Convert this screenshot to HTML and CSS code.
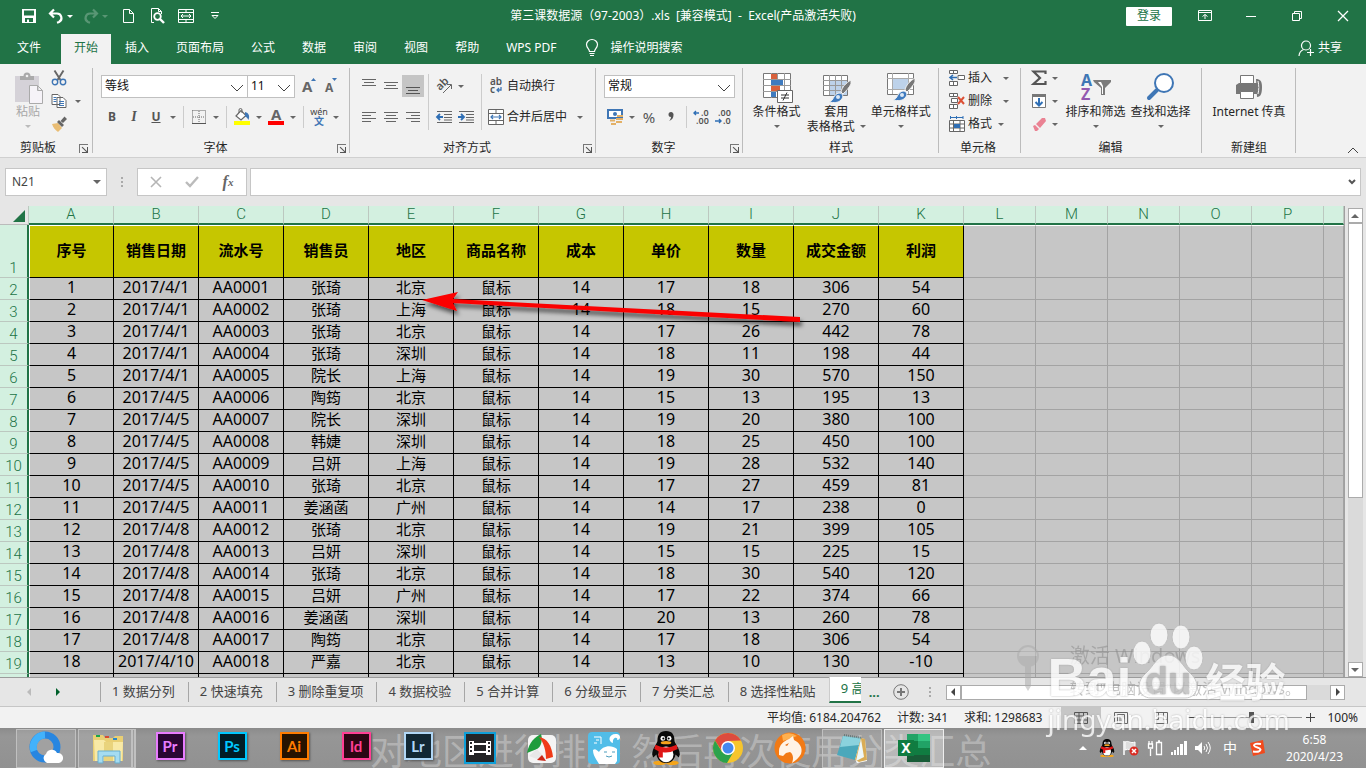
FILE: index.html
```html
<!DOCTYPE html>
<html lang="zh-CN">
<head>
<meta charset="utf-8">
<title>第三课数据源（97-2003）.xls - Excel</title>
<link rel="stylesheet" href="styles.css">
</head>
<body>
<div class="app">
<header class="titlebar">
  <div class="quick">
    <button class="q-btn" aria-label="保存"><svg width="16" height="16" viewBox="0 0 16 16"><path fill="#fff" fill-rule="evenodd" d="M1 1h14v14H1zM3 2.500v5h10v-5zM4 10v4h2v-2.500h2V14h4v-4z"/></svg></button>
    <button class="q-btn wide" aria-label="撤消"><svg width="16" height="16" viewBox="0 0 16 16"><path fill="none" stroke="#fff" stroke-width="2.200" d="M6 1.500L2 5.500l4 4M2 5.500h7a4.500 4.500 0 0 1 2 8.500l-2 .7"/></svg><i class="dd light"></i></button>
    <button class="q-btn wide faded" aria-label="恢复"><svg width="16" height="16" viewBox="0 0 16 16"><path fill="none" stroke="#fff" stroke-width="2.200" d="M10 1.500l4 4-4 4M14 5.500H7A4.500 4.500 0 0 0 5 14l2 .7"/></svg><i class="dd light"></i></button>
    <button class="q-btn" aria-label="新建"><svg width="16" height="16" viewBox="0 0 16 16"><path fill="none" stroke="#fff" d="M3.500 1.500h6l4 4v9h-10zM9.500 1.500v4h4"/></svg></button>
    <button class="q-btn" aria-label="打印预览"><svg width="16" height="16" viewBox="0 0 16 16"><path fill="none" stroke="#fff" d="M5 14.500H2.500v-14h7l3 3V6M9.500.5v3h3"/><circle cx="8.500" cy="8.500" r="3.300" fill="none" stroke="#fff" stroke-width="1.800"/><path stroke="#fff" stroke-width="2.400" d="M11 11l4 4"/></svg></button>
    <button class="q-btn" aria-label="合并后居中"><svg width="16" height="16" viewBox="0 0 16 16"><path fill="none" stroke="#fff" d="M.5 1.500h15v13H.5zM.5 4.500h15M.5 11.500h15M8 1.500v3M8 11.500v3M3 8h10M5 6L3 8l2 2M11 6l2 2-2 2"/></svg></button>
    <button class="q-btn" aria-label="自定义快速访问工具栏"><svg width="10" height="10" viewBox="0 0 10 10"><path fill="none" stroke="#fff" d="M1 1.500h8M2 4.500h6L5 7.500z"/></svg></button>
  </div>
  <div class="doc-title">第三课数据源（97-2003）.xls &nbsp;[兼容模式] &nbsp;- &nbsp;Excel(产品激活失败)</div>
  <div class="win">
    <button class="login">登录</button>
    <button class="w-btn" aria-label="功能区显示选项"><svg width="14" height="12" viewBox="0 0 14 12"><path fill="none" stroke="#fff" d="M.5.5h13v10H.5zM.5 2.500h13M7 9V4.500M4.500 6.500L7 4.500l2.500 2"/></svg></button>
    <button class="w-btn" aria-label="最小化"><svg width="12" height="12" viewBox="0 0 12 12"><path stroke="#fff" d="M1 6.500h10"/></svg></button>
    <button class="w-btn" aria-label="还原"><svg width="12" height="12" viewBox="0 0 12 12"><path fill="none" stroke="#fff" d="M1.500 3.500h7v7h-7zM3.500 3.500v-2h7v7h-2"/></svg></button>
    <button class="w-btn" aria-label="关闭"><svg width="12" height="12" viewBox="0 0 12 12"><path stroke="#fff" stroke-width="1.300" d="M1 1l10 10M11 1L1 11"/></svg></button>
  </div>
</header>
<nav class="tabs">
  <button class="tab file">文件</button>
  <button class="tab active">开始</button>
  <button class="tab">插入</button>
  <button class="tab">页面布局</button>
  <button class="tab">公式</button>
  <button class="tab">数据</button>
  <button class="tab">审阅</button>
  <button class="tab">视图</button>
  <button class="tab">帮助</button>
  <button class="tab">WPS PDF</button>
  <button class="tab tell"><svg width="14" height="18" viewBox="0 0 14 18"><path fill="none" stroke="#fff" stroke-width="1.200" d="M4.500 12.500c0-2.500-3-3.500-3-7a5.500 5 0 0 1 11 0c0 3.500-3 4.500-3 7zM4.500 14.500h5M5 16.500h4"/></svg>操作说明搜索</button>
  <button class="tab share"><svg width="16" height="16" viewBox="0 0 16 16"><circle cx="8" cy="5.500" r="4.500" fill="none" stroke="#fff" stroke-width="1.200"/><path fill="none" stroke="#fff" stroke-width="1.200" d="M1 16c.2-3.500 2-5.500 4.500-6.500M9 12.500h7M12.500 9v7"/></svg>共享</button>
</nav>

<section class="ribbon">
  <div class="group g-clip">
    <div class="body">
      <button class="big off"><svg width="30" height="32" viewBox="0 0 30 32"><path fill="#d5d2d8" d="M2 4h24v26H2z"/><path fill="#aaa" d="M7 8V4h3.500a3.500 3.500 0 0 1 7 0H21v4z"/><circle cx="14" cy="4" r="1.300" fill="#f2f2f2"/><path fill="#f6f3f8" stroke="#aaa" d="M16.500 13.500h8l5 5v13h-13zM24.500 13.500v5h5"/></svg>粘贴<i class="dd"></i></button>
      <div class="stack">
        <button class="ic" aria-label="剪切"><svg width="16" height="16" viewBox="0 0 16 16"><path stroke="#666" stroke-width="1.900" d="M3.500.5l6 9.500M12.500.5l-6 9.500"/><g fill="none" stroke="#3f76b5" stroke-width="1.400"><circle cx="4" cy="12" r="2.700"/><circle cx="12" cy="12" r="2.700"/></g></svg></button>
        <button class="ic" aria-label="复制"><svg width="16" height="16" viewBox="0 0 16 16"><path fill="#fff" stroke="#666" d="M1 1.500h6l2 2v8H1zM6 4.500h6l3 3v7H6z"/><path stroke="#3f76b5" d="M2.500 4.500h3M2.500 6.500h3M2.500 8.500h3M8 8.500h5M8 10.500h5M8 12.500h5"/></svg><i class="dd"></i></button>
        <button class="ic" aria-label="格式刷"><svg width="16" height="16" viewBox="0 0 16 16"><path fill="#e9bd74" d="M1 8l6-1 4 5-4 4C4 14 2 11 1 8z"/><path fill="#666" d="M6 6l2-2 5 5-2 2zM9.500 5l4-4.500L16 3l-4 4z"/></svg></button>
      </div>
    </div>
    <div class="caption">剪贴板<button class="launch" aria-label="剪贴板选项"></button></div>
  </div>

  <div class="group g-font">
    <div class="rows">
      <div class="row">
        <label class="sel s-font"><select aria-label="字体"><option>等线</option></select><svg width="14" height="8" viewBox="0 0 14 8"><path fill="none" stroke="#444" d="M1 1l6 6 6-6"/></svg></label>
        <label class="sel s-size"><select aria-label="字号"><option>11</option></select><svg width="14" height="8" viewBox="0 0 14 8"><path fill="none" stroke="#444" d="M1 1l6 6 6-6"/></svg></label>
        <button class="ic" aria-label="增大字号"><svg width="16" height="18" viewBox="0 0 16 18"><text x="1" y="15" class="glyph t15">A</text><path fill="#3f76b5" d="M10 4l2.500-3L15 4z"/></svg></button>
        <button class="ic" aria-label="减小字号"><svg width="16" height="18" viewBox="0 0 16 18"><text x="2" y="15" class="glyph t12">A</text><path fill="#3f76b5" d="M9 1l2.500 3L14 1z"/></svg></button>
      </div>
      <div class="row">
        <button class="ic bold">B</button><button class="ic ital">I</button><button class="ic under">U</button><i class="dd"></i>
        <span class="sep"></span>
        <button class="ic" aria-label="边框"><svg width="14" height="14" viewBox="0 0 14 14"><path fill="none" stroke="#666" stroke-dasharray="1 1" d="M.5.5h13v13M.5.5V13M7 1v12M1 7h12"/><path stroke="#555" d="M0 13.500h14"/></svg></button><i class="dd"></i>
        <span class="sep"></span>
        <button class="ic" aria-label="填充颜色"><svg width="18" height="18" viewBox="0 0 18 18"><path fill="#fff" stroke="#666" stroke-width="1.200" d="M3 8l5-5.500 5 5L8 12z"/><path fill="none" stroke="#666" d="M6 5V2a1.500 1.500 0 0 1 3 0v3"/><path fill="#3f76b5" d="M12 4c4 1 5 4 3.500 8-1-2-2-3-3.500-3.500z"/><path fill="#ff0" d="M1 13h16v4H1z"/></svg></button><i class="dd"></i>
        <button class="ic" aria-label="字体颜色"><svg width="18" height="18" viewBox="0 0 18 18"><text x="4" y="12" class="glyph t15">A</text><path fill="red" d="M1 13h16v4H1z"/></svg></button><i class="dd"></i>
        <span class="sep"></span>
        <button class="ic" aria-label="拼音"><svg width="18" height="18" viewBox="0 0 18 18"><text x="9" y="7" text-anchor="middle" class="wen">wén</text><text x="9" y="17" text-anchor="middle" class="wenz">文</text></svg></button><i class="dd"></i>
      </div>
    </div>
    <div class="caption">字体<button class="launch" aria-label="字体选项"></button></div>
  </div>

  <div class="group g-align">
    <div class="cols">
      <div class="rows">
        <div class="row">
          <button class="ic" aria-label="顶端对齐"><svg width="14" height="16" viewBox="0 0 14 16"><path stroke="#666" d="M0 1.500h14M2 4.500h10M0 7.500h14"/></svg></button>
          <button class="ic" aria-label="垂直居中"><svg width="14" height="16" viewBox="0 0 14 16"><path stroke="#666" d="M0 4.500h14M2 7.500h10M0 10.500h14"/></svg></button>
          <button class="ic on" aria-label="底端对齐"><svg width="14" height="16" viewBox="0 0 14 16"><path stroke="#555" d="M0 9.500h14M2 12.500h10M0 15.500h14"/></svg></button>
        </div>
        <div class="row">
          <button class="ic" aria-label="左对齐"><svg width="14" height="12" viewBox="0 0 14 12"><path stroke="#666" d="M0 1.500h14M0 4.500h9M0 7.500h14M0 10.500h9"/></svg></button>
          <button class="ic" aria-label="居中"><svg width="14" height="12" viewBox="0 0 14 12"><path stroke="#666" d="M0 1.500h14M2 4.500h10M0 7.500h14M2 10.500h10"/></svg></button>
          <button class="ic" aria-label="右对齐"><svg width="14" height="12" viewBox="0 0 14 12"><path stroke="#666" d="M0 1.500h14M5 4.500h9M0 7.500h14M5 10.500h9"/></svg></button>
        </div>
      </div>
      <span class="vsep"></span>
      <div class="rows mid">
        <div class="row"><button class="ic" aria-label="方向"><svg width="18" height="18" viewBox="0 0 18 18"><text transform="translate(5 14) rotate(-45)" class="orient">ab</text><path fill="none" stroke="#666" d="M8 16l8-8M12 7.500h4.500V12"/></svg></button><i class="dd"></i></div>
        <div class="row">
          <button class="ic" aria-label="减少缩进"><svg width="16" height="14" viewBox="0 0 16 14"><path stroke="#666" d="M1 1.500h15M8 4.500h8M8 7.500h8M1 12.500h15M8 10h8"/><path fill="none" stroke="#2f6fb5" stroke-width="1.800" d="M7 7H1M4 4L1 7l3 3"/></svg></button>
          <button class="ic" aria-label="增加缩进"><svg width="16" height="14" viewBox="0 0 16 14"><path stroke="#666" d="M1 1.500h15M8 4.500h8M8 7.500h8M1 12.500h15M8 10h8"/><path fill="none" stroke="#2f6fb5" stroke-width="1.800" d="M0 7h6M3 4l3 3-3 3"/></svg></button>
        </div>
      </div>
      <span class="vsep"></span>
      <div class="rows wraps">
        <div class="row"><button class="lbl"><svg width="16" height="18" viewBox="0 0 16 18"><text x="2" y="8" class="abc">ab</text><text x="2" y="16" class="abc">c</text><path fill="none" stroke="#3f76b5" stroke-width="1.300" d="M13 10v3H9M11 11l-2 2 2 2"/></svg>自动换行</button></div>
        <div class="row"><button class="lbl"><svg width="16" height="16" viewBox="0 0 16 16"><path fill="#fff" stroke="#666" d="M.5.5h15v15H.5z"/><path stroke="#666" d="M.5 4.500h15M.5 11.500h15M8 .5v4M8 11.500v4"/><path fill="none" stroke="#3f76b5" stroke-width="1.200" d="M2.500 8h11M5 6L3 8l2 2M11 6l2 2-2 2"/></svg>合并后居中</button><i class="dd gap"></i></div>
      </div>
    </div>
    <div class="caption">对齐方式<button class="launch" aria-label="对齐方式选项"></button></div>
  </div>

  <div class="group g-num">
    <div class="rows">
      <div class="row"><label class="sel s-num"><select aria-label="数字格式"><option>常规</option></select><svg width="14" height="8" viewBox="0 0 14 8"><path fill="none" stroke="#444" d="M1 1l6 6 6-6"/></svg></label></div>
      <div class="row">
        <button class="ic" aria-label="会计数字格式"><svg width="18" height="16" viewBox="0 0 18 16"><path fill="#fff" stroke="#3f76b5" stroke-width="2" d="M2 1h14v8H2z"/><circle cx="9" cy="5" r="2" fill="#3f76b5"/><path stroke="#e3b066" stroke-width="2" d="M11 7h6M10 10h7M4 11.500h5M10 13h6M5 15h5"/></svg></button><i class="dd"></i>
        <button class="ic pct">%</button><button class="ic" aria-label="千位分隔样式"><svg width="6" height="10" viewBox="0 0 6 10"><path fill="#555" d="M3 0a2.500 2.500 0 0 1 2.500 3C5.500 6 4 8 1 9c1-1 2-2.500 2-4A2.500 2.500 0 0 1 3 0z"/></svg></button>
        <span class="sep"></span>
        <button class="ic" aria-label="增加小数位数"><svg width="18" height="18" viewBox="0 0 18 18"><text x="8" y="8" class="dec">.0</text><text x="3" y="16" class="dec">.00</text><path fill="none" stroke="#2f6fb5" stroke-width="1.400" d="M6 5H1M3 3L1 5l2 2"/></svg></button>
        <button class="ic" aria-label="减少小数位数"><svg width="18" height="18" viewBox="0 0 18 18"><text x="3" y="8" class="dec">.00</text><text x="8" y="16" class="dec">.0</text><path fill="none" stroke="#2f6fb5" stroke-width="1.400" d="M0 13h6M4 11l2 2-2 2"/></svg></button>
      </div>
    </div>
    <div class="caption">数字<button class="launch" aria-label="数字选项"></button></div>
  </div>

  <div class="group g-style">
    <div class="body">
      <button class="big"><svg width="32" height="32" viewBox="0 0 32 32"><path fill="#fff" stroke="#777" d="M2.500 1.500h27v24h-27z"/><path stroke="#999" d="M2 7.500h28M2 13.500h28M2 19.500h28M10.500 1v25M16.500 1v25M23.500 1v25"/><path fill="#d9613c" d="M10 2h6v5h-6zM10 14h9v5h-9z"/><path fill="#3f7bbf" d="M10 8h12v5H10zM10 20h5v5h-5z"/><path fill="#fff" stroke="#666" d="M16.500 18.500h15v12h-15z"/><path fill="none" stroke="#333" d="M20 23h8M20 26h8M26 20.500l-4 8"/></svg>条件格式<i class="dd"></i></button>
      <button class="big"><svg width="32" height="32" viewBox="0 0 32 32"><path fill="#fff" stroke="#777" d="M3.500 3.500h24v20h-24z"/><path fill="#bdd2ea" d="M10 9h17v14H10z"/><path stroke="#999" d="M3 8.500h24M3 13.500h24M3 18.500h24M9.500 3v20M15.500 3v20M21.500 3v20"/><path fill="#777" stroke="#f2f2f2" d="M21 20c1-5 5-9 10-12v4c-2 4-5 7-8 10z"/><path fill="#3f7bbf" stroke="#f2f2f2" d="M9 30c5-1 4-8 10-9 4 0 5 4 2 7-3 3-7 3-12 2z"/><circle cx="18" cy="25" r="2" fill="#dce8f5"/></svg>套用<span>表格格式<i class="dd side"></i></span></button>
      <button class="big"><svg width="32" height="32" viewBox="0 0 32 32"><path fill="#fff" stroke="#777" d="M2.500 1.500h26v21h-26z"/><path stroke="#aaa" d="M2 6.500h26M2 17.500h26M7.500 1v21M23.500 1v21"/><path fill="#bdd2ea" d="M8 7h15v10H8z"/><path fill="#777" stroke="#f2f2f2" d="M20 18c1-5 5-9 10-12v4c-2 4-5 7-8 10z"/><path fill="#3f7bbf" stroke="#f2f2f2" d="M8 28c5-1 4-8 10-9 4 0 5 4 2 7-3 3-7 3-12 2z"/><circle cx="17" cy="23" r="2" fill="#dce8f5"/></svg>单元格样式<i class="dd"></i></button>
    </div>
    <div class="caption">样式</div>
  </div>

  <div class="group g-cells">
    <div class="stack">
      <button class="lbl"><svg width="16" height="16" viewBox="0 0 16 16"><path fill="#fff" stroke="#666" d="M.5.500h8v3h-8zM4.500.5v3M.5 11.500h8v4h-8zM4.500 11.500v4M9 5.500h6.500v4H9z"/><path fill="none" stroke="#2f6fb5" stroke-width="1.600" d="M8 7.500H1M4 5L1 7.500 4 10"/></svg>插入<i class="dd gap"></i></button>
      <button class="lbl"><svg width="16" height="16" viewBox="0 0 16 16"><path fill="#fff" stroke="#666" d="M.5.500h8v3h-8zM4.500.5v3M.5 11.500h8v4h-8zM4.500 11.500v4M2.500 5.500h6v4h-6z"/><path stroke="#dc5035" stroke-width="2" d="M9 4l6 7M15 4l-6 7"/></svg>删除<i class="dd gap"></i></button>
      <button class="lbl"><svg width="16" height="16" viewBox="0 0 16 16"><path fill="#fff" stroke="#666" d="M.5 4.500h15v11H.5zM.5 8h15M.5 12h15M4.500 4v11M11 4v11"/><path fill="#2f6fb5" d="M5 8h6v4H5z"/><path stroke="#2f6fb5" d="M1 1.500h13M1.500 0v3M14 0v3M7.500 0v3"/></svg>格式<i class="dd"></i></button>
    </div>
    <div class="caption">单元格</div>
  </div>

  <div class="group g-edit">
    <div class="body">
      <div class="stack">
        <button class="ic" aria-label="自动求和"><svg width="16" height="16" viewBox="0 0 16 16"><path fill="none" stroke="#555" stroke-width="2.200" d="M14.500 4V1.500H2.500L9 8l-6.500 6h12V11"/></svg><i class="dd"></i></button>
        <button class="ic" aria-label="填充"><svg width="16" height="16" viewBox="0 0 16 16"><path fill="#fff" stroke="#777" d="M1.500 1.500h13v13h-13z"/><path fill="#777" d="M1 1h14v3H1z"/><path fill="none" stroke="#2f6fb5" stroke-width="2" d="M8 5v7M4.500 9L8 12.500 11.500 9"/></svg><i class="dd"></i></button>
        <button class="ic" aria-label="清除"><svg width="16" height="16" viewBox="0 0 16 16"><path fill="#ea8293" d="M5 8l6-6h3l1 3-6 7zM2 10l2-1 4 4-2 2H4z"/></svg><i class="dd"></i></button>
      </div>
      <button class="big"><svg width="32" height="32" viewBox="0 0 32 32"><text x="1" y="14" class="az a">A</text><text x="1" y="28" class="az z">Z</text><path fill="#7b7b7b" d="M13 8h18v2l-6 6v7h-4v-7l-7-6z"/><path fill="#fff" d="M18 10h3l2 4v8h-1v-7z"/></svg>排序和筛选<i class="dd"></i></button>
      <button class="big"><svg width="32" height="32" viewBox="0 0 32 32"><path stroke="#3f76b5" stroke-width="4" stroke-linecap="round" d="M4 26l8-8"/><circle cx="19" cy="11" r="9" fill="#fff" stroke="#3f76b5" stroke-width="2"/></svg>查找和选择<i class="dd"></i></button>
    </div>
    <div class="caption">编辑</div>
  </div>

  <div class="group g-new">
    <div class="body"><button class="big"><svg width="32" height="32" viewBox="0 0 32 32"><path fill="#777" d="M3 13l3-2h18l2 2v9H3zM23 7c4 0 6 2 6 8s-1 10-5 10z"/><path fill="#fff" stroke="#777" d="M7.500 3.500h13v8h-13zM7.500 19.500h13v7h-13z"/><path stroke="#fff" d="M25 9c1 4 1 9 0 13"/></svg>Internet 传真</button></div>
    <div class="caption">新建组</div>
  </div>
  <button class="collapse" aria-label="折叠功能区"><svg width="12" height="7" viewBox="0 0 12 7"><path fill="none" stroke="#444" d="M1 6l5-5 5 5"/></svg></button>
</section>

<section class="formula">
  <div class="name"><input aria-label="名称框" value="N21"><i class="dd big-dd"></i></div>
  <span class="dots"></span>
  <div class="fx">
    <button aria-label="取消"><svg width="12" height="12" viewBox="0 0 12 12"><path stroke="#b5b5b5" stroke-width="1.600" d="M1 1l10 10M11 1L1 11"/></svg></button>
    <button aria-label="输入"><svg width="14" height="12" viewBox="0 0 14 12"><path fill="none" stroke="#bbb" stroke-width="2.400" d="M1 6l4 4 8-9"/></svg></button>
    <button class="fxb">f<sub>x</sub></button>
  </div>
  <div class="bar"><input aria-label="编辑栏"><svg width="8" height="6" viewBox="0 0 8 6"><path fill="none" stroke="#555" stroke-width="2" d="M1 1l3 3 3-3"/></svg></div>
</section>

<main class="sheet">
  <div class="cells">
    <table class="grid">
      <colgroup><col class="c-row"><col class="c-data" span="11"><col class="c-blank" span="5"><col></colgroup>
      <thead><tr id="letters"></tr></thead>
      <tbody id="rows"></tbody>
    </table>
    <svg class="arrow" width="400" height="50" viewBox="0 0 400 50"><defs><filter id="sh" x="-10%" y="-50%" width="120%" height="220%"><feDropShadow dx="2" dy="4" stdDeviation="2" flood-color="#000" flood-opacity=".6"/></filter></defs><path filter="url(#sh)" fill="#fb0505" d="M2 15L38 7l-5 7 347 18v5L33 18l4 8z"/></svg>
  </div>
  <div class="vscroll"><button class="sb up" aria-label="向上滚动"></button><div class="thumb"></div><div class="track"></div><button class="sb down" aria-label="向下滚动"></button></div>
</main>

<footer class="sheets">
  <div class="nav"><button class="tri left" aria-label="上一个"></button><button class="tri right" aria-label="下一个"></button></div>
  <button class="st">1 数据分列</button><button class="st">2 快速填充</button><button class="st">3 删除重复项</button><button class="st">4 数据校验</button><button class="st">5 合并计算</button><button class="st">6 分级显示</button><button class="st">7 分类汇总</button><button class="st">8 选择性粘贴</button><button class="st cur">9 高级筛选</button>
  <button class="more">...</button>
  <button class="add" aria-label="新工作表"><svg width="16" height="16" viewBox="0 0 16 16"><circle cx="8" cy="8" r="7.300" fill="none" stroke="#777"/><path stroke="#777" stroke-width="2" d="M8 4v8M4 8h8"/></svg></button>
  <span class="dots"></span>
  <div class="hscroll"><button class="sb lt" aria-label="向左滚动"></button><div class="thumb"></div><div class="track"></div><button class="sb rt" aria-label="向右滚动"></button></div>
</footer>

<div class="status">
  <span>平均值: 6184.204762</span><span>计数: 341</span><span>求和: 1298683</span>
  <div class="views">
    <button class="on" aria-label="普通"><svg width="14" height="12" viewBox="0 0 14 12"><path fill="none" stroke="#555" d="M.5.500h13v11H.5zM.5 4h13M.5 8h13M5 0v12M9.500 0v12"/></svg></button>
    <button aria-label="页面布局"><svg width="14" height="12" viewBox="0 0 14 12"><path fill="none" stroke="#666" d="M.5.500h13v11H.5zM3.500 2.500h7v9M3.500 2.500v9M5 5h4M5 7h4M5 9h4"/></svg></button>
    <button aria-label="分页预览"><svg width="14" height="12" viewBox="0 0 14 12"><path fill="none" stroke="#666" d="M.5.500h13v11H.5zM.5 7.500h4v-7M9.500.5v7h4"/></svg></button>
  </div>
  <button class="zm" aria-label="缩小"><svg width="8" height="9" viewBox="0 0 8 9"><path stroke="#444" d="M0 4.500h8"/></svg></button><input class="zoom" type="range" min="0" max="100" value="50" aria-label="缩放"><button class="zm" aria-label="放大"><svg width="9" height="9" viewBox="0 0 9 9"><path stroke="#444" d="M0 4.500h9M4.500 0v9"/></svg></button><button class="zv">100%</button>
</div>

<div class="taskbar">
  <div class="subtitle">对地区进行排序 然后再次使用分类汇总</div>
  <button class="task open" aria-label="QQ浏览器"><svg width="34" height="34" viewBox="0 0 34 34"><circle cx="16" cy="16" r="12" fill="none" stroke="#2886e0" stroke-width="7"/><path fill="none" stroke="#42b2fb" stroke-width="7" d="M5 20A12 12 0 0 1 16 4"/><path fill="#fff" d="M18 32a5 5 0 0 1-1-9 6 6 0 0 1 11-1 5 5 0 0 1 2 10z"/></svg></button>
  <button class="task open multi" aria-label="文件资源管理器"><svg width="34" height="32" viewBox="0 0 34 32"><path fill="#e9cf74" d="M2 3h10l2 3h8l2-2h8v25H2z"/><path fill="#f8e9a6" d="M3 8h10l2 2h17l-1 19H4z"/><path fill="#e9d37c" d="M13 10h9v19h-9z"/><path fill="#1ba54a" d="M5 3h4v2H5z"/><path fill="#d84c32" d="M14 4h4v2h-4z"/><path fill="#2b88c9" d="M22 6h4v2h-4z"/><path fill="#a5dcf1" stroke="#68aecf" d="M7 31V19h22v12h-5v-7H12v7z"/></svg></button>
  <button class="task"><span class="adobe pr">Pr</span></button>
  <button class="task"><span class="adobe ps">Ps</span></button>
  <button class="task"><span class="adobe ai">Ai</span></button>
  <button class="task"><span class="adobe id">Id</span></button>
  <button class="task"><span class="adobe lr">Lr</span></button>
  <button class="task" aria-label="视频编辑"><svg width="32" height="32" viewBox="0 0 32 32"><path fill="#242527" stroke="#0f9fd8" stroke-width="2" d="M1 1h30v30H1z"/><path fill="#fff" d="M5 9h5v2h12V9h5v14h-5v-2H10v2H5z"/><path fill="#242527" d="M10 13h12v6H10zM6 10h2v2H6zM6 14h2v2H6zM6 18h2v2H6zM24 10h2v2h-2zM24 14h2v2h-2zM24 18h2v2h-2z"/></svg></button>
  <button class="task" aria-label="录屏"><svg width="32" height="32" viewBox="0 0 32 32"><rect x="2" y="3" width="28" height="28" rx="5" fill="#f4f4f4"/><path fill="#1f9c3c" d="M1 21C3 10 9 5 15 2c2 6 0 13-4 15z"/><path fill="#f03a18" d="M13 5c8 1 13 9 14 20l-7 2C20 19 18 11 13 5z"/><path fill="#e8e8e8" d="M3 24l8-7 9 10-4 2z"/><path fill="#cc2716" d="M11 28l5-5 4 6z"/></svg></button>
  <button class="task" aria-label="学习助手"><svg width="32" height="32" viewBox="0 0 32 32"><rect width="32" height="32" rx="4" fill="#51bde8"/><path fill="#fff" d="M11 32c-2-4-6-8-6-14 2-2 4 0 6 2 3-6 12-8 18-3v12l-2 3zM25 11c-6-2-4-10 4-9 4 1 4 6 0 6 2-3-5-4-4 3z"/><path fill="none" stroke="#fff" d="M6 5h7v7M8 8h3M6 11h3"/><path fill="none" stroke="#4d9dbd" d="M16 20h3M24 20h3M18 24q3 2 6 0"/></svg></button>
  <button class="task" aria-label="QQ"><svg width="32" height="34" viewBox="0 0 28 32"><use href="#penguin"/></svg></button>
  <button class="task" aria-label="Chrome"><svg width="32" height="32" viewBox="0 0 32 32"><circle cx="16" cy="16" r="15" fill="#f6c52d"/><path fill="#dd4b3e" d="M3 8.500A15 15 0 0 1 29 8.500L16 9l-6 10z"/><path fill="#2ba24c" d="M3 8.500A15 15 0 0 0 15 31l7-12-12 1z"/><circle cx="16" cy="16" r="7" fill="#fff"/><circle cx="16" cy="16" r="5.500" fill="#4388ef"/></svg></button>
  <button class="task" aria-label="猎豹浏览器"><svg width="32" height="32" viewBox="0 0 32 32"><circle cx="16" cy="16" r="15.500" fill="#f27a15"/><path fill="#ffb04f" d="M8 3q8-4 15 1L9 9z"/><path fill="#fff3e5" d="M5 19c0-6 5-10 10-12l4-3 1 4c6 3 9 8 7 14-2 4-6 7-9 9 2-5 1-9-2-11l-4 1-3 3-4-1z"/><path fill="#e76c10" d="M11 13l4-2-2 3z"/></svg></button>
  <button class="task open" aria-label="记事本"><svg width="32" height="32" viewBox="0 0 32 32"><path fill="#fff" d="M7 4l22 3 2 22-10 2z"/><path fill="#4ba8bb" d="M7 4l18 2-6 22L1 23z"/><path fill="#8bd2dd" d="M7 4l18 2-2 7L4 15z"/><path fill="#d9ac55" d="M25 6l4 1 2 21-8 2-4-2z"/><path fill="#eef8fa" d="M25 7l3 18-8 4z"/><path stroke="#677" stroke-width="2" stroke-dasharray="1 1" d="M8 3l18 3"/></svg></button>
  <button class="task open front" aria-label="Excel"><svg width="32" height="30" viewBox="0 0 32 30"><path fill="#22a366" d="M9 1h23v28H9z"/><path fill="#33c481" d="M20 1h12v7H20z"/><path fill="#107c41" d="M9 8h23v14H9z"/><path fill="#21a366" d="M20 8h12v7H20z"/><path fill="#185c37" d="M9 22h23v7H9z"/><path fill="#107c41" d="M0 7h16v16H0z"/><text x="8" y="20" text-anchor="middle" class="xl">X</text></svg></button>
  <div class="tray">
    <button class="tri up" aria-label="显示隐藏的图标"></button>
    <svg width="16" height="18" viewBox="0 0 28 32"><g id="penguin"><ellipse cx="8" cy="30" rx="6" ry="2" fill="#f4a51c"/><ellipse cx="20" cy="30" rx="6" ry="2" fill="#f4a51c"/><path fill="#090909" d="M14 0c6 0 8 4 8 9 0 3 5 7 5 13l-1 3-3-3c-1 5-4 8-9 8s-8-3-9-8l-3 3-1-3c0-6 5-10 5-13 0-5 2-9 8-9z"/><ellipse cx="14" cy="22" rx="7" ry="7.500" fill="#fff"/><circle cx="11" cy="7" r="2.200" fill="#fff"/><circle cx="17" cy="7" r="2.200" fill="#fff"/><circle cx="11.500" cy="7" r="1"/><circle cx="16.500" cy="7" r="1"/><ellipse cx="14" cy="11" rx="5" ry="1.500" fill="#f6a11c"/><path fill="#df1717" d="M4 13q10 5 20 0l1 4q-7 4-14 3v5H7v-6l-4-2z"/></g></svg>
    <svg width="16" height="16" viewBox="0 0 16 16"><path stroke="#fff" stroke-width="1.500" d="M1 1v14"/><path fill="#ddd" stroke="#fff" d="M2 2c4-2 5 2 10 0v7c-5 2-6-1-10 1z"/><circle cx="11" cy="11" r="4.500" fill="#da2d24"/><path stroke="#fff" stroke-width="1.500" d="M9 9l4 4M13 9l-4 4"/></svg>
    <svg width="16" height="16" viewBox="0 0 16 16"><path fill="none" stroke="#fff" stroke-width="1.300" d="M3.500 16V9M1.500 4v4h4V4zM2 4V1M5 4V1M9.500 2.500h5v12h-5zM11 1h2"/></svg>
    <svg width="16" height="14" viewBox="0 0 16 14"><path fill="#fff" d="M0 11h2v3H0zM3 9h2v5H3zM6 6h2v8H6zM9 3h3v11H9zM13 0h3v14h-3z"/></svg>
    <svg width="16" height="14" viewBox="0 0 16 14"><path fill="#fff" d="M0 5h3l4-4v12L3 9H0z"/><path fill="none" stroke="#fff" d="M9 5q1.500 2 0 4M11 3q3 4 0 8M13 1q4.500 6 0 12"/></svg>
    <span class="ime">中</span>
    <svg width="16" height="16" viewBox="0 0 16 16"><path fill="#f24a1d" d="M1 3l13-3 2 13-12 3z"/><path fill="none" stroke="#fff" stroke-width="2" d="M12 4q-7-1-7 1.500C6 8 11 7 11.500 9.500 11 12 7 12 4 11.500"/></svg>
    <div class="clock"><span>6:58</span><span>2020/4/23</span></div>
  </div>
</div>

<div class="activate"><svg width="24" height="48" viewBox="0 0 24 48"><circle cx="12" cy="12" r="11" fill="#aaa"/><path fill="#c8c8c8" d="M3 12h18a9 9 0 0 0-18 0z"/><path fill="#aaa" d="M9 22h6v20l-3 5-3-5z"/></svg><div><b>激活 Windows</b><span>转到"电脑设置"以激活 Windows。</span></div></div>
<div class="brand">
  <div class="brand-row"><span class="bai">Bai</span><svg width="72" height="78" viewBox="0 0 72 78"><g fill="#fff" stroke="#bdbdbd"><ellipse cx="10" cy="32" rx="9" ry="12"/><ellipse cx="27" cy="14" rx="9" ry="12"/><ellipse cx="49" cy="16" rx="9" ry="12"/><ellipse cx="62" cy="37" rx="9" ry="12"/><path d="M36 34c11 0 14 11 23 19 10 9 7 24-6 24H19C6 77 3 62 13 53c9-8 12-19 23-19z"/></g><text x="36" y="73" text-anchor="middle" class="du">du</text></svg><span class="jy">经验</span></div>
  <div class="url">jingyan.baidu.com</div>
</div>
</div>
<script src="app.js"></script>
</body>
</html>
```
FILE: styles.css
```css
* { box-sizing: border-box; }
body { margin: 0; font: 12px/16px "Noto Sans", "Noto Sans CJK SC", sans-serif; color: #262626; background: #e6e6e6; overflow: hidden; }
button, input, select { font: inherit; color: inherit; border: 0; background: none; padding: 0; margin: 0; border-radius: 0; outline: 0; }
button { display: inline-flex; align-items: center; justify-content: center; white-space: nowrap; flex: none; }
svg { flex: none; display: block; overflow: visible; }
.app { position: relative; display: flex; flex-direction: column; height: 100vh; }

.titlebar { display: grid; grid-template-columns: 1fr auto 1fr; align-items: center; height: 32px; background: #217346; color: #fff; flex: none; }
.quick { display: flex; align-items: center; padding-left: 14px; }
.q-btn { width: 29px; height: 24px; }
.q-btn.wide { width: 35px; gap: 3px; }
.faded { opacity: .25; }
.doc-title { white-space: nowrap; }
.win { display: flex; align-items: center; justify-content: flex-end; }
.login { width: 46px; height: 19px; background: #fff; color: #217346; border-radius: 1px; margin-right: 10px; }
.w-btn { width: 46px; height: 30px; }

.tabs { display: flex; align-items: stretch; gap: 1px; height: 32px; padding: 2px 11px 0 4px; background: #217346; color: #fff; flex: none; }
.tab { padding: 0 13px 3px; }
.tab.file { margin-right: 6px; }
.tab.active { background: #f2f2f2; color: #217346; }
.tab.tell { gap: 12px; margin-left: 1px; }
.tab.share { gap: 4px; margin-left: auto; }

.dd { flex: none; width: 0; height: 0; margin: 0 3px; border: 3px solid transparent; border-top-color: #666; border-bottom: 0; }
.dd.light { border-top-color: #fff; margin: 0; }
.dd.gap { margin-left: 10px; }
.big-dd { border-width: 4px; border-bottom: 0; }

.ribbon { position: relative; display: flex; height: 94px; background: #f2f2f2; border-bottom: 1px solid #d0d0d0; flex: none; }
.group { position: relative; display: flex; flex-direction: column; padding: 6px 8px 0; }
.group::after { content: ""; position: absolute; right: 0; top: 4px; bottom: 4px; width: 1px; background: #bcbcbc; }
.g-clip { width: 93px; }
.g-font { width: 257px; }
.g-align { width: 246px; }
.g-num { width: 147px; }
.g-style { width: 196px; }
.g-cells { width: 82px; }
.g-edit { width: 181px; }
.g-new { width: 94px; }
.body, .cols, .row { display: flex; }
.body, .rows, .cols, .g-cells .stack { flex: 1; min-height: 0; }
.cols .rows { flex: none; }
.row { align-items: center; height: 22px; }
.rows { display: flex; flex-direction: column; gap: 9px; padding-top: 5px; }
.stack { display: flex; flex-direction: column; align-items: flex-start; gap: 7px; }
.stack .ic, .stack .lbl { height: 16px; }
.stack .ic { width: auto; gap: 5px; }
.caption { position: relative; height: 18px; line-height: 18px; text-align: center; margin-right: 12px; flex: none; }
.launch { position: absolute; right: -16px; top: 5px; width: 9px; height: 9px; border-left: 1px solid #777; border-top: 1px solid #777; }
.launch::before { content: ""; position: absolute; right: 0; bottom: 0; width: 5px; height: 5px; border-right: 1px solid #555; border-bottom: 1px solid #555; }
.launch::after { content: ""; position: absolute; left: 1px; top: 4px; width: 7px; height: 1px; background: #555; transform: rotate(45deg); }
.ic { width: 22px; height: 22px; color: #555; }
.ic.on { background: #c5c5c5; }
.bold, .under { font-weight: 700; font-size: 12px; }
.ital { font: italic 700 14px "Liberation Serif", serif; }
.under { text-decoration: underline; }
.pct { font-size: 15px; }
.sep { width: 1px; height: 22px; background: #ccc; margin: 0 4px; }
.vsep { width: 1px; height: 56px; background: #ccc; margin: 4px 4px 0; }
.mid { width: 44px; }
.lbl { gap: 3px; }
.wraps { padding-left: 2px; }
.big { flex-direction: column; justify-content: flex-start; flex: 1; line-height: 15px; padding-top: 2px; }
.big .dd { margin-top: 6px; }
.big span { display: flex; align-items: center; }
.big .dd.side { margin: 0 0 0 5px; }
.off { color: #a8a8a8; }
.off .dd { border-top-color: #bbb; }
.g-clip .body { gap: 6px; padding-left: 3px; }
.g-clip .big { flex: none; width: 34px; }
.g-clip .caption { margin-right: 17px; }
.g-clip .launch { right: -20px; }
.g-font .sel + .sel { margin-left: -1px; }
.sel { position: relative; height: 23px; background: #fff; border: 1px solid #c0c0c0; }
.sel select { appearance: none; width: 100%; height: 21px; padding-left: 3px; color: #111; }
.sel svg { position: absolute; right: 3px; top: 8px; pointer-events: none; }
.s-font { width: 150px; }
.s-size { width: 49px; margin-right: 3px; }
.s-num { width: 131px; }
.g-style { padding: 6px 6px 0; }
.g-style .big:first-child { flex: 0 0 55px; }
.g-style .caption, .g-new .caption { margin-right: 0; }
.g-cells { padding-left: 10px; }
.g-cells .caption { margin-right: 6px; }
.g-cells .dd.gap { margin-left: 8px; }
.g-edit { padding-left: 10px; }
.g-edit .body { gap: 4px; }
.g-edit .big { flex: 0 0 61px; }
.g-edit .stack { width: 30px; }
.g-edit .stack .ic { gap: 2px; }
.g-edit .caption { margin-right: 4px; }
.collapse { margin: auto 7px 3px auto; }
.glyph { font-weight: 700; fill: #666; }
.t15 { font-size: 15px; }
.t12 { font-size: 12px; }
.wen { font-size: 9px; fill: #444; }
.wenz { font-size: 10px; font-weight: 700; fill: #3f76b5; }
.orient { font-size: 11px; fill: #555; font-weight: 600; }
.abc { font-size: 10px; font-weight: 600; fill: #555; }
.dec { font-size: 9px; font-weight: 600; fill: #555; }
.az { font-size: 16px; font-weight: 700; }
.az.a { fill: #3f76b5; }
.az.z { fill: #9359b0; }

.formula { display: flex; align-items: center; height: 48px; padding: 0 5px; flex: none; }
.name { display: flex; align-items: center; width: 102px; height: 28px; background: #fff; border: 1px solid #c6c6c6; color: #444; }
.name input { flex: 1; min-width: 0; padding-left: 6px; }
.name .dd { margin-right: 5px; }
.dots { width: 2px; height: 11px; background: repeating-linear-gradient(#aaa 0 2px, transparent 2px 4px); margin: 0 14px; }
.fx { display: flex; align-items: center; width: 110px; height: 28px; background: #fff; border: 1px solid #c6c6c6; margin-right: 3px; }
.fx button { flex: 1; }
.fxb { font: italic 700 16px "Liberation Serif", serif; color: #666; }
.fxb sub { font-size: 11px; vertical-align: baseline; }
.bar { display: flex; align-items: center; flex: 1; height: 28px; background: #fff; border: 1px solid #c6c6c6; padding-right: 4px; }
.bar input { flex: 1; }

.sheet { display: flex; flex: 1; min-height: 0; border-bottom: 1px solid #9b9b9b; }
.cells { position: relative; flex: 1; min-width: 0; overflow: hidden; border-right: 1px solid #a0a0a0; }
.grid { width: 100%; table-layout: fixed; border-collapse: separate; border-spacing: 0; background: #c6c6c6; color: #000; }
.c-row { width: 29px; }
.c-data { width: 85px; }
.c-blank { width: 72px; }
.grid th, .grid td { padding: 0; text-align: center; overflow: hidden; white-space: nowrap; font-weight: 400; line-height: 19px; }
.grid thead th { height: 19px; line-height: 17px; font-size: 15px; font-weight: 300; font-family: Roboto, sans-serif; color: #217346; background: #d3f0e0; border-right: 1px solid #bcc8c0; border-bottom: 2px solid #217346; vertical-align: bottom; }
.grid thead .corner { background: #e6e6e6; border-bottom: 1px solid #bbb; }
.corner i { display: block; margin: 0 3px 2px auto; width: 0; border: 6px solid #217346; border-left-color: transparent; border-top-color: transparent; }
.grid tbody th { height: 22px; line-height: 18px; font-size: 15px; font-weight: 300; font-family: Roboto, sans-serif; color: #217346; background: #d3f0e0; border-bottom: 1px solid #bcc8c0; border-right: 2px solid #217346; vertical-align: bottom; }
.grid td { height: 22px; padding-bottom: 2px; border-right: 1px solid #a3a3a3; border-bottom: 1px solid #a3a3a3; font-size: 15px; }
.grid td.f { border-color: #000; }
.grid td.f:nth-child(2) { border-left: 1px solid #fff; }
.grid td.n { font-size: 16px; }
.grid tr.head td { height: 53px; padding-bottom: 3px; border-top: 1px solid #fff; }
.grid tr.head td.f { background: #c6c600; font-weight: 700; }
.arrow { position: absolute; left: 420px; top: 79px; }
.vscroll { display: flex; flex-direction: column; align-items: center; width: 21px; padding: 2px 3px 0 2px; }
.sb { width: 15px; height: 15px; background: #fff; border: 1px solid #ababab; }
.sb::before { content: ""; border: 4px solid transparent; }
.up::before { border-bottom-color: #666; border-top: 0; }
.down::before { border-top-color: #666; border-bottom: 0; }
.lt::before { border-right-color: #444; border-left: 0; }
.rt::before { border-left-color: #444; border-right: 0; }
.vscroll .thumb { flex: 275; width: 15px; background: #fff; border: 1px solid #ababab; }
.vscroll .track { flex: 166; width: 15px; background: #dadada; }

.sheets { display: flex; align-items: center; height: 29px; padding-right: 21px; border-bottom: 1px solid #c6c6c6; color: #444; font-size: 13px; flex: none; }
.nav { display: flex; width: 100px; padding-left: 27px; gap: 24px; }
.tri { width: 0; height: 0; border: 4px solid transparent; }
.tri.left { border-right-color: #bbb; border-left: 0; margin-right: 1px; }
.tri.right { border-left-color: #00602b; border-right: 0; }
.st { height: 20px; padding: 0 13px 3px 11px; border-left: 1px solid #a6a6a6; }
.st.cur { height: 26px; align-self: flex-start; width: 32px; overflow: hidden; justify-content: flex-start; background: #fff; color: #217346; border-left: 1px solid #ccc; border-bottom: 2px solid #217346; padding-right: 0; margin-top: -1px; }
.more { font-weight: 700; color: #217346; margin: 0 13px 0 8px; }
.sheets .dots { margin: 0 15px 0 20px; }
.hscroll { display: flex; flex: 1; height: 15px; }
.hscroll .thumb { flex: 345; background: #fff; border: 1px solid #ababab; }
.hscroll .track { flex: 23; background: #dadada; }

.status { display: flex; align-items: center; justify-content: flex-end; height: 21px; padding-right: 8px; background: #f2f2f2; white-space: nowrap; flex: none; }
.status span { margin-right: 16px; }
.views { display: flex; align-self: stretch; margin: 0 3px 0 3px; }
.views button { width: 40px; }
.views .on { background: #c6c6c6; }
.zm { width: 16px; }
.zoom { appearance: none; width: 102px; height: 12px; background: linear-gradient(#999, #999) center / 100% 1px no-repeat; }
.zoom::-webkit-slider-thumb { appearance: none; width: 5px; height: 11px; background: #555; border: 0; }
.zv { margin-left: 9px; }

.taskbar { position: relative; display: flex; align-items: center; height: 40px; padding: 0 23px 0 15px; background: linear-gradient(#8b8b8b, #969696 20%, #919191); flex: none; }
.task { position: relative; width: 62px; height: 39px; }
.task.open::before { content: ""; position: absolute; left: 1px; right: 1px; top: 0; bottom: 0; border: 1px solid #c0c0c0; background: rgba(255,255,255,.12); }
.task.multi::before { right: 3px; border-right: 5px double #c0c0c0; }
.task.front::before { background: rgba(255,255,255,.35); border-color: #eee; }
.task svg { position: relative; }
.adobe { display: flex; align-items: center; justify-content: center; width: 29px; height: 28px; margin-bottom: 4px; border: 2px solid; font: 700 15px Lato, sans-serif; box-shadow: 1px 1px 2px #555; }
.pr { color: #e87cff; background: #2a0634; }
.ps { color: #00c8ff; background: #001d26; }
.ai { color: #ff7c00; background: #261300; }
.id { color: #ff3f94; background: #2b0714; }
.lr { color: #b0d6f5; background: #112733; }
.xl { font-size: 14px; font-weight: 700; fill: #fff; }
.subtitle { position: absolute; left: 370px; top: 2px; font-size: 36px; line-height: 44px; color: rgba(255,255,255,.3); white-space: pre; }
.tray { display: flex; align-items: center; gap: 8px; margin-left: auto; color: #fff; }
.tri.up { border-bottom-color: #fff; border-top: 0; margin-right: 4px; }
.ime { font-size: 14px; margin: 0 4px; }
.clock { display: flex; flex-direction: column; align-items: center; line-height: 17px; margin-left: 13px; }

.activate { position: absolute; right: 66px; bottom: 72px; display: flex; gap: 30px; color: #888; pointer-events: none; opacity: .5; white-space: nowrap; }
.activate div { display: flex; flex-direction: column; gap: 12px; }
.activate b { font-size: 20px; font-weight: 400; line-height: 24px; }
.activate span { font-size: 15px; }
.brand { position: absolute; right: 76px; bottom: 29px; opacity: .8; color: #fff; pointer-events: none; text-shadow: 0 0 2px #999; }
.brand-row { display: flex; align-items: flex-end; height: 78px; }
.bai { font: 700 54px/44px "Liberation Sans", sans-serif; }
.jy { font-size: 40px; line-height: 34px; font-weight: 700; margin-left: 2px; }
.du { font: 700 38px "Liberation Sans", sans-serif; fill: #bcbcbc; }
.url { font-size: 28px; line-height: 40px; text-align: center; }
```
FILE: app.js
```js
const heads = ["序号", "销售日期", "流水号", "销售员", "地区", "商品名称", "成本", "单价", "数量", "成交金额", "利润"];
const sales = [
  ["2017/4/1", "张琦", "北京", 17, 18, 306, 54],
  ["2017/4/1", "张琦", "上海", 18, 15, 270, 60],
  ["2017/4/1", "张琦", "北京", 17, 26, 442, 78],
  ["2017/4/1", "张琦", "深圳", 18, 11, 198, 44],
  ["2017/4/1", "院长", "上海", 19, 30, 570, 150],
  ["2017/4/5", "陶筠", "北京", 15, 13, 195, 13],
  ["2017/4/5", "院长", "深圳", 19, 20, 380, 100],
  ["2017/4/5", "韩婕", "深圳", 18, 25, 450, 100],
  ["2017/4/5", "吕妍", "上海", 19, 28, 532, 140],
  ["2017/4/5", "张琦", "北京", 17, 27, 459, 81],
  ["2017/4/5", "姜涵菡", "广州", 14, 17, 238, 0],
  ["2017/4/8", "张琦", "北京", 19, 21, 399, 105],
  ["2017/4/8", "吕妍", "深圳", 15, 15, 225, 15],
  ["2017/4/8", "张琦", "北京", 18, 30, 540, 120],
  ["2017/4/8", "吕妍", "广州", 17, 22, 374, 66],
  ["2017/4/8", "姜涵菡", "深圳", 20, 13, 260, 78],
  ["2017/4/8", "陶筠", "北京", 17, 18, 306, 54],
  ["2017/4/10", "严嘉", "北京", 13, 10, 130, -10]
];
const blanks = "<td></td>".repeat(6);

document.getElementById("letters").innerHTML =
  '<th class="corner"><i></i></th>' + [..."ABCDEFGHIJKLMNOP", ""].map(c => `<th>${c}</th>`).join("");

const rows = ['<tr class="head"><th>1</th>' + heads.map(h => `<td class="f">${h}</td>`).join("") + blanks + "</tr>"];
sales.forEach(([date, who, city, price, qty, total, profit], i) => {
  const serial = "AA" + String(i + 1).padStart(4, "0");
  const cells = [i + 1, date, serial, who, city, "鼠标", 14, price, qty, total, profit];
  rows.push(`<tr><th>${i + 2}</th>` + cells.map(v =>
    `<td class="f${/\d/.test(v) ? " n" : ""}">${v}</td>`).join("") + blanks + "</tr>");
});
rows.push("<tr><th></th>" + '<td class="f"></td>'.repeat(11) + blanks + "</tr>");
document.getElementById("rows").innerHTML = rows.join("");
```
